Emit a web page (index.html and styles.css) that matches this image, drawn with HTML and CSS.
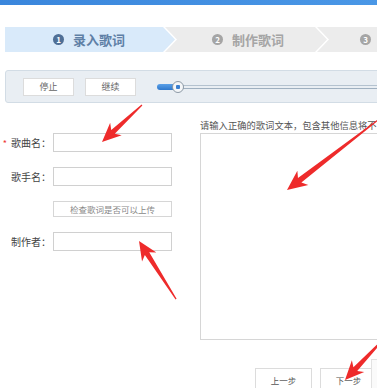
FILE: index.html
```html
<!DOCTYPE html>
<html lang="zh-CN">
<head>
  <meta charset="UTF-8" />
  <title>录入歌词</title>
  <link rel="stylesheet" href="styles.css">
</head>
<body>

  <div class="topbar"></div>

  <div class="steps">
    <div class="step active"><span class="num">1</span>录入歌词</div>
    <div class="step"><span class="num">2</span>制作歌词</div>
    <div class="step last"><span class="num">3</span>上传歌词</div>
  </div>

  <div class="toolbar">
    <button class="btn">停止</button>
    <button class="btn">继续</button>
    <div class="slider">
      <div class="fill"></div>
      <div class="thumb"></div>
    </div>
  </div>

  <div class="main">
    <div class="form">
      <div class="row">
        <label><span class="req">*</span>歌曲名：</label>
        <input type="text" class="field" />
      </div>
      <div class="row">
        <label>歌手名：</label>
        <input type="text" class="field" />
      </div>
      <div class="row">
        <label></label>
        <button class="check">检查歌词是否可以上传</button>
      </div>
      <div class="row">
        <label>制作者：</label>
        <input type="text" class="field" />
      </div>
    </div>
    <div class="lyrics">
      <p class="hint">请输入正确的歌词文本，包含其他信息将不能被审核通过</p>
      <textarea class="lyrics-box"></textarea>
    </div>
  </div>

  <div class="footer">
    <button class="btn step-btn">上一步</button>
    <button class="btn step-btn">下一步</button>
  </div>

  <div class="side-tool"></div>

  <!-- red annotation arrows drawn over the page -->
  <svg class="marks" width="377" height="388" viewBox="0 0 377 388">
    <g fill="#ee2b2b">
      <polygon transform="translate(102 142) rotate(137.2)" points="0,0 -19,-8.5 -15,-2.6 -54.5,-0.6 -54.5,0.6 -15,2.6 -19,8.5" />
      <polygon transform="translate(287 190) rotate(142.4)" points="0,0 -20,-9 -16,-2.8 -115,-0.6 -115,0.6 -16,2.8 -20,9" />
      <polygon transform="translate(139 241) rotate(-122.5)" points="0,0 -19,-8.5 -15,-2.6 -69,-0.6 -69,0.6 -15,2.6 -19,8.5" />
      <polygon transform="translate(345 380) rotate(133.4)" points="0,0 -19,-8.5 -15,-2.6 -52,-1 -52,1 -15,2.6 -19,8.5" />
    </g>
  </svg>

</body>
</html>
```

FILE: styles.css
```css
body {
  margin: 0;
  width: 377px;
  height: 388px;
  overflow: hidden;
  position: relative;
  font-family: "Noto Sans CJK SC", "Liberation Sans", sans-serif;
  color: #444;
  background: #fff;
}
.topbar {
  height: 5px;
  background: linear-gradient(to right, #3a86dc, #4a97e6);
}

/* step bar */
.steps {
  display: flex;
  margin-top: 22px;
  padding-left: 5px;
  width: 560px;
}
.step {
  height: 25px;
  width: 162px;
  flex-shrink: 0;
  margin-left: -10px;
  padding-left: 47px;
  box-sizing: border-box;
  display: flex;
  align-items: center;
  gap: 9px;
  font-size: 13px;
  font-weight: bold;
  color: #a5a5a5;
  background: #ececec;
  clip-path: polygon(0 0, calc(100% - 12px) 0, 100% 50%, calc(100% - 12px) 100%, 0 100%, 12px 50%);
}
.step.active {
  width: 170px;
  margin-left: 0;
  padding-left: 48px;
  color: #5f80a6;
  background: #d9eafa;
  clip-path: polygon(0 0, calc(100% - 12px) 0, 100% 50%, calc(100% - 12px) 100%, 0 100%);
}
.step.last {
  padding-left: 43px;
}
.num {
  width: 11px;
  height: 11px;
  border-radius: 50%;
  background: #a5a5a5;
  color: #fff;
  font-size: 8px;
  line-height: 11px;
  text-align: center;
}
.step.active .num {
  background: #4f6f96;
}

/* player toolbar */
.toolbar {
  display: flex;
  align-items: center;
  margin: 18px 0 0 5px;
  width: 420px;
  height: 33px;
  box-sizing: border-box;
  padding-left: 17px;
  background: #e9eef3;
  border: 1px solid #d2dce5;
  border-radius: 3px;
}
.btn {
  width: 51px;
  height: 18px;
  padding: 0;
  background: #fff;
  border: 1px solid #dcdcdc;
  font-family: inherit;
  font-size: 9px;
  color: #666;
}
.btn + .btn {
  margin-left: 11px;
}
.slider {
  position: relative;
  margin-left: 21px;
  flex: 1;
  height: 12px;
}
.slider::before {
  content: "";
  position: absolute;
  left: 15px;
  right: 0;
  top: 4px;
  height: 2px;
  border-top: 1px solid #b4c2cf;
  border-bottom: 1px solid #9fb0c0;
}
.fill {
  position: absolute;
  left: 0;
  top: 3px;
  width: 21px;
  height: 6px;
  border-radius: 3px;
  background: linear-gradient(#5aa0e8, #2f78cc);
}
.thumb {
  position: absolute;
  left: 15px;
  top: 0;
  width: 10px;
  height: 10px;
  border-radius: 50%;
  background: radial-gradient(circle, #3a7fd0 0 2px, #f4f6f8 2.5px);
  border: 1px solid #8d9aa6;
}

/* form + lyrics */
.main {
  display: flex;
  margin-top: 16px;
  width: 460px;
}
.form {
  width: 200px;
  padding-top: 14px;
  display: flex;
  flex-direction: column;
  gap: 15px;
}
.row {
  display: flex;
  align-items: center;
}
.row label {
  width: 51px;
  padding-right: 2px;
  text-align: right;
  font-size: 10px;
  color: #444;
  white-space: nowrap;
}
.req {
  color: #e33;
  margin-right: 4px;
  font-size: 9px;
}
.field {
  width: 119px;
  height: 19px;
  box-sizing: border-box;
  border: 1px solid #d0d0d0;
  padding: 0 4px;
  margin: 0;
}
.check {
  width: 119px;
  height: 16px;
  padding: 0;
  background: #fff;
  border: 1px solid #d6d6d6;
  font-family: inherit;
  font-size: 8.5px;
  color: #888;
}
.lyrics {
  width: 250px;
}
.hint {
  margin: 0 0 2px;
  font-size: 9.3px;
  line-height: 12px;
  color: #555;
  white-space: nowrap;
}
.lyrics-box {
  display: block;
  width: 240px;
  height: 207px;
  margin: 0;
  box-sizing: border-box;
  border: 1px solid #d6d6d6;
  resize: none;
}

/* bottom navigation */
.footer {
  display: flex;
  margin: 28px 0 0 255px;
}
.step-btn {
  width: 64px;
  height: 24px;
  font-size: 8.5px;
  color: #555;
}
.btn.step-btn + .btn.step-btn {
  margin-left: 8px;
}
.side-tool {
  position: absolute;
  left: 371px;
  top: 359px;
  width: 12px;
  height: 30px;
  border: 1px solid #e2e2e2;
  background: #fafafa;
}
.marks {
  position: absolute;
  left: 0;
  top: 0;
  pointer-events: none;
}
```
